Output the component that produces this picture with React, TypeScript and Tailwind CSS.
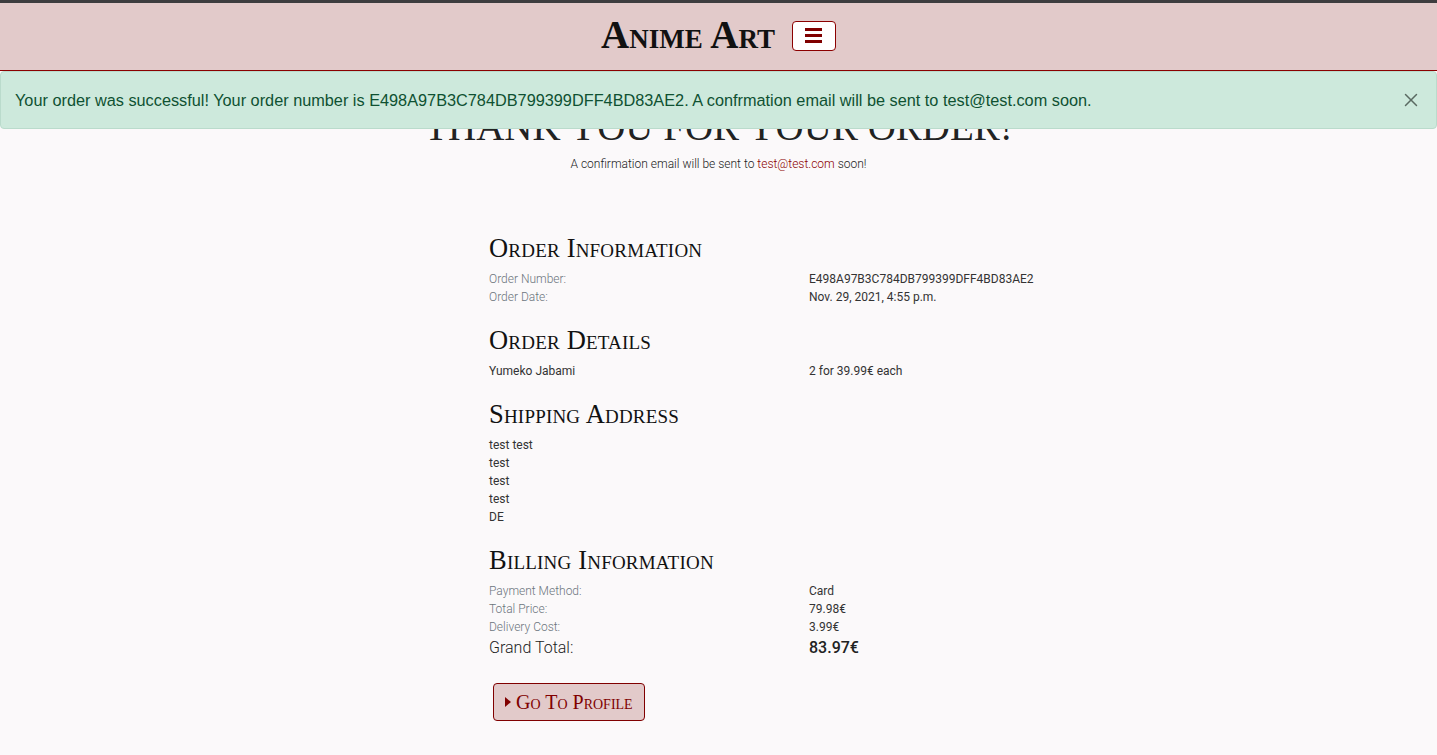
import { X } from 'lucide-react'

const serif = { fontFamily: '"Liberation Serif", serif' }

function Row({ label, value }: { label: string; value: string }) {
  return (
    <div className="flex text-xs leading-[18px]">
      <div className="w-[320px] font-light text-[#6c757d]">{label}</div>
      <div className="text-[#333]">{value}</div>
    </div>
  )
}

function Heading({ children }: { children: React.ReactNode }) {
  return (
    <h2
      className="text-[26.5px] leading-[30px] text-[#111] [font-variant:small-caps] tracking-[0.2px] mb-[7px]"
      style={serif}
    >
      {children}
    </h2>
  )
}

export default function App() {
  return (
    <div className="relative min-h-[755px] bg-[#fbf9fa] font-['Roboto',sans-serif]">
      <div className="h-[3px] bg-[#3d3d3f]" />
      <header className="h-[68px] bg-[#e2caca] border-b border-[#8b0000] flex items-center justify-center gap-[17px]">
        <span
          className="text-[39px] leading-none text-[#111] [font-variant:small-caps] mt-[-4px] font-semibold"
          style={serif}
        >
          Anime Art
        </span>
        <button className="w-[44px] h-[30px] bg-white border border-[#8b0000] rounded-[4px] flex flex-col items-center justify-center gap-[3px] mt-[-2px]">
          <span className="block w-[17px] h-[3px] bg-[#800000]" />
          <span className="block w-[17px] h-[3px] bg-[#800000]" />
          <span className="block w-[17px] h-[3px] bg-[#800000]" />
        </button>
      </header>

      <div className="absolute left-0 right-0 top-[71px] h-[58px] z-10 bg-[#cde9dc] border border-[#badbcc] rounded-[4px] flex items-center pl-[14px] pr-[14px]">
        <p className="flex-1 text-[16.3px] text-[#0f5132] font-['Liberation_Sans',sans-serif]">
          Your order was successful! Your order number is E498A97B3C784DB799399DFF4BD83AE2. A confrmation email will be sent to test@test.com soon.
        </p>
        <X className="size-[22px] text-[#5a6a62]" strokeWidth={1.6} />
      </div>

      <main className="flex flex-col items-center pt-[36px]">
        <h1 className="text-[39px] leading-[39px] text-[#222] uppercase" style={serif}>
          Thank You For Your Order!
        </h1>
        <p className="mt-[10px] text-xs font-light text-[#222]">
          A confirmation email will be sent to <span className="text-[#8b0000]">test@test.com</span> soon!
        </p>
      </main>

      <section className="ml-[489px] mt-[61px] w-[640px]">
        <Heading>Order Information</Heading>
        <Row label="Order Number:" value="E498A97B3C784DB799399DFF4BD83AE2" />
        <Row label="Order Date:" value="Nov. 29, 2021, 4:55 p.m." />

        <div className="mt-[19px]">
          <Heading>Order Details</Heading>
          <div className="flex text-xs leading-[18px] text-[#333]">
            <div className="w-[320px]">Yumeko Jabami</div>
            <div>2 for 39.99€ each</div>
          </div>
        </div>

        <div className="mt-[19px]">
          <Heading>Shipping Address</Heading>
          <div className="text-xs leading-[18px] text-[#333]">
            <div>test test</div>
            <div>test</div>
            <div>test</div>
            <div>test</div>
            <div>DE</div>
          </div>
        </div>

        <div className="mt-[19px]">
          <Heading>Billing Information</Heading>
          <Row label="Payment Method:" value="Card" />
          <Row label="Total Price:" value="79.98€" />
          <Row label="Delivery Cost:" value="3.99€" />
          <div className="flex text-base leading-[24px] text-[#222]">
            <div className="w-[320px] font-light">Grand Total:</div>
            <div className="font-medium">83.97€</div>
          </div>
        </div>

        <button
          className="mt-[23px] ml-[4px] h-[38px] px-[11px] bg-[#e2caca] border border-[#800000] rounded-[4px] flex items-center gap-[5px] text-[#800000]"
        >
          <svg width="6" height="10" viewBox="0 0 6 10"><path d="M0 0 L6 5 L0 10 Z" fill="#800000" /></svg>
          <span className="text-[20px] [font-variant:small-caps]" style={serif}>Go To Profile</span>
        </button>
      </section>
    </div>
  )
}
